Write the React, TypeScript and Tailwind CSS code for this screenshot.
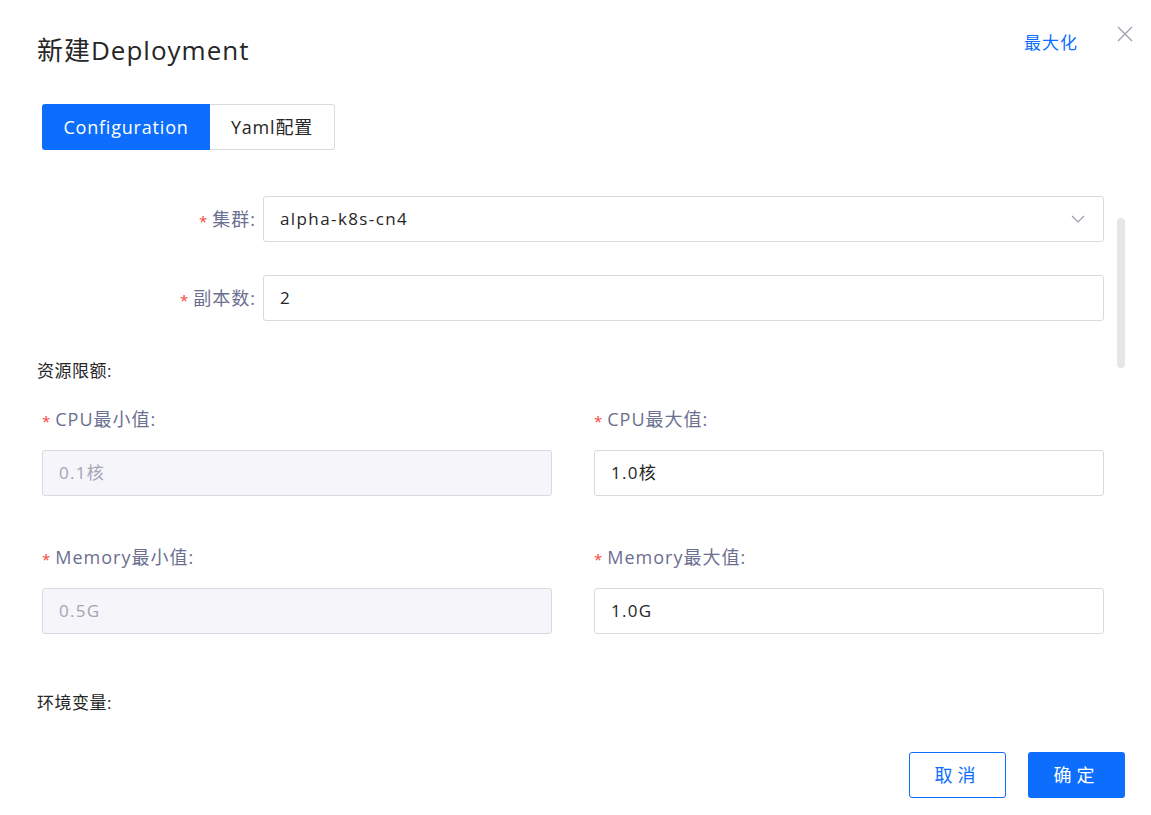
import React from 'react'

const font = { fontFamily: '"Open Sans", "Noto Sans CJK SC", sans-serif' }

function Star() {
    return (
        <span className="relative top-[2px] mr-[5px] text-[15px] leading-none tracking-normal text-[#f5483b]">
            *
        </span>
    )
}

function Field({
    label,
    value,
    disabled,
}: {
    label: string
    value: string
    disabled?: boolean
}) {
    return (
        <div className="flex flex-1 flex-col">
            <div className="flex h-[24px] items-center text-[18px] tracking-[1px] text-[#6b7090]">
                <Star />
                {label}:
            </div>
            <div
                className={`mt-[19px] flex h-[46px] items-center rounded-[3px] border px-[16px] text-[17px] tracking-[1.3px] ${
                    disabled
                        ? 'border-[#d9d9e2] bg-[#f5f5fa] text-[#a3a5b5]'
                        : 'border-[#d9d9e2] bg-white text-[#262626]'
                }`}
            >
                {value}
            </div>
        </div>
    )
}

export default function App() {
    return (
        <div
            className="flex h-[815px] w-[1151px] flex-col overflow-hidden bg-white"
            style={font}
        >
            {/* Header */}
            <div className="flex items-start justify-between pl-[37px] pr-[18px] pt-[34px]">
                <h1 className="h-[32px] text-[26px] leading-[32px] tracking-[1px] text-[#262626]">
                    新建Deployment
                </h1>
                <div className="flex items-start">
                    <span className="mt-[-4px] text-[17px] tracking-[1px] text-[#0d6efd]">
                        最大化
                    </span>
                    <svg
                        className="ml-[39px] mt-[-8px]"
                        width="16"
                        height="16"
                        viewBox="0 0 16 16"
                        fill="none"
                        stroke="#a0a3b0"
                        strokeWidth="1.4"
                    >
                        <path d="M1 1L15 15M15 1L1 15" />
                    </svg>
                </div>
            </div>

            {/* Tabs */}
            <div className="mt-[38px] flex pl-[42px]">
                <div className="flex h-[46px] w-[168px] items-center justify-center rounded-l-[3px] bg-[#0d6efd] text-[18px] font-medium tracking-[0.8px] text-white">
                    Configuration
                </div>
                <div className="flex h-[46px] w-[125px] items-center justify-center rounded-r-[3px] border border-l-0 border-[#d9d9e2] text-[18px] tracking-[0.8px] text-[#262626]">
                    Yaml配置
                </div>
            </div>

            {/* Body */}
            <div className="flex flex-1 overflow-hidden">
                <div className="flex w-[1104px] flex-col pl-[37px]">
                    <div className="mt-[46px] flex items-center">
                        <div className="flex w-[226px] items-center justify-end pr-[7px] text-[18px] tracking-[1px] text-[#6b7090]">
                            <Star />
                            集群:
                        </div>
                        <div className="flex h-[46px] flex-1 items-center justify-between rounded-[3px] border border-[#d9d9e2] pl-[16px] pr-[18px] text-[17px] tracking-[1.4px] text-[#262626]">
                            alpha-k8s-cn4
                            <svg
                                width="14"
                                height="8"
                                viewBox="0 0 14 8"
                                fill="none"
                                stroke="#9a9cae"
                                strokeWidth="1.2"
                            >
                                <path d="M1 1L7 7L13 1" />
                            </svg>
                        </div>
                    </div>
                    <div className="mt-[33px] flex items-center">
                        <div className="flex w-[226px] items-center justify-end pr-[7px] text-[18px] tracking-[1px] text-[#6b7090]">
                            <Star />
                            副本数:
                        </div>
                        <div className="flex h-[46px] flex-1 items-center rounded-[3px] border border-[#d9d9e2] px-[16px] text-[17px] tracking-[1.3px] text-[#262626]">
                            2
                        </div>
                    </div>

                    <div className="mt-[38px] h-[24px] text-[17px] leading-[24px] tracking-[0.5px] text-[#262626]">
                        资源限额:
                    </div>

                    <div className="mt-[24px] flex gap-[42px] pl-[5px]">
                        <Field label="CPU最小值" value="0.1核" disabled />
                        <Field label="CPU最大值" value="1.0核" />
                    </div>
                    <div className="mt-[49px] flex gap-[42px] pl-[5px]">
                        <Field label="Memory最小值" value="0.5G" disabled />
                        <Field label="Memory最大值" value="1.0G" />
                    </div>

                    <div className="mt-[57px] h-[24px] text-[17px] leading-[24px] tracking-[0.5px] text-[#262626]">
                        环境变量:
                    </div>
                </div>
                {/* Scrollbar */}
                <div className="ml-[13px] w-[8px]">
                    <div className="mt-[68px] h-[150px] w-[8px] rounded-full bg-[#e6e6e6]" />
                </div>
            </div>

            {/* Footer */}
            <div className="flex justify-end gap-[22px] pb-[17px] pr-[26px]">
                <button className="flex h-[46px] w-[97px] items-center justify-center rounded-[3px] border border-[#0d6efd] text-[18px] tracking-[5px] text-[#0d6efd]">
                    取消
                </button>
                <button className="flex h-[46px] w-[97px] items-center justify-center rounded-[3px] bg-[#0d6efd] text-[18px] tracking-[5px] text-white">
                    确定
                </button>
            </div>
        </div>
    )
}
